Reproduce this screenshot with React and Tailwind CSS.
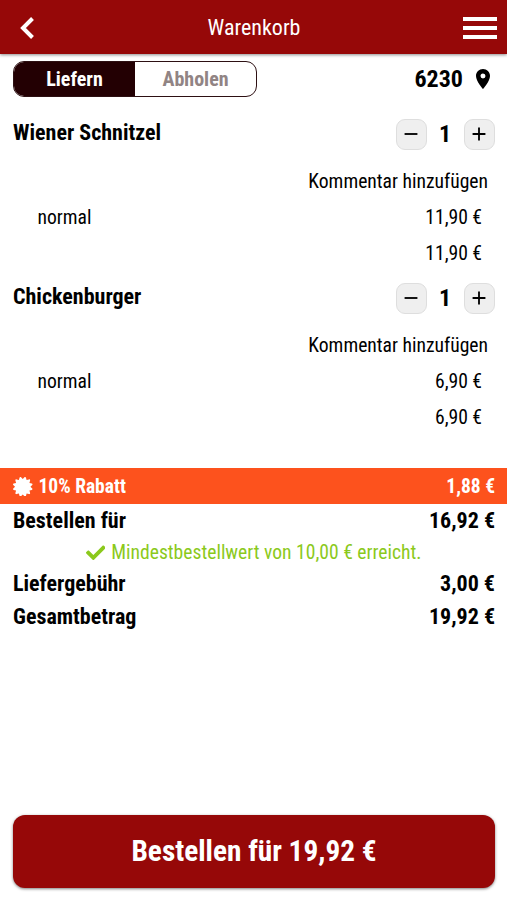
import { useState } from "react";
import { MdAdd, MdRemove, MdLocationOn } from "react-icons/md";
import { FaCertificate, FaCheck } from "react-icons/fa";

const items = [
  { id: 1, name: "Wiener Schnitzel", variant: "normal", price: "11,90 €" },
  { id: 2, name: "Chickenburger", variant: "normal", price: "6,90 €" }
];

function QtyButton({ children, label }) {
  return (
    <button
      aria-label={label}
      className="w-[31px] h-[31px] shrink-0 flex items-center justify-center rounded-[9px] border border-[#dedede] bg-[#efefef] text-[22px] text-black"
    >
      {children}
    </button>
  );
}

function CartItem({ item }) {
  return (
    <div className="h-[164px] text-[19.6px] leading-[36px]">
      <div className="h-[47px] flex justify-between pl-[13px] pr-[12.5px]">
        <h2 className="text-[22px] leading-[44px] font-bold">{item.name}</h2>
        <div className="h-[46px] flex items-center">
          <QtyButton label="Weniger"><MdRemove /></QtyButton>
          <span className="w-[37px] text-center text-[24px] font-bold">1</span>
          <QtyButton label="Mehr"><MdAdd /></QtyButton>
        </div>
      </div>
      <div className="h-[42px] pr-[19px] pt-[6px] text-right">Kommentar hinzufügen</div>
      <div className="h-9 flex justify-between pl-[37.5px] pr-[25px]">
        <span>{item.variant}</span>
        <span>{item.price}</span>
      </div>
      <div className="h-9 pr-[25px] text-right">{item.price}</div>
    </div>
  );
}

function SumRow({ label, value }) {
  return (
    <div className="h-[33px] flex items-center justify-between pl-[13px] pr-3 text-[22px] font-bold">
      <span>{label}</span>
      <span>{value}</span>
    </div>
  );
}

export default function App() {
  const [mode, setMode] = useState("liefern");

  return (
    <div className="w-[507px] h-[900px] flex flex-col overflow-hidden bg-white text-black font-['Roboto_Condensed','Roboto',sans-serif] [font-stretch:75%] font-[440]">
      <header className="h-[54px] shrink-0 flex items-center justify-between pl-[13px] pr-[10px] bg-[#960808] text-white shadow-[0_1px_3px_rgba(0,0,0,0.45)]">
        <svg width="32" height="24" viewBox="-2 -1 32 24" fill="none" stroke="currentColor" strokeWidth="4">
          <path d="M17.5 2.5 8 12l9.5 9.5" />
        </svg>
        <h1 className="text-[22px] font-[440]">Warenkorb</h1>
        <svg width="34" height="24" viewBox="0 0 34 24" fill="currentColor">
          <path d="M0 2h34v4H0zM0 11h34v4H0zM0 20h34v4H0z" />
        </svg>
      </header>

      <div className="h-[57px] shrink-0 flex justify-between pt-[7px] pl-[13px] pr-3">
        <div className="w-[244px] h-9 flex rounded-[11px] border border-[#2d1013] overflow-hidden text-[20px] font-bold">
          <button
            onClick={() => setMode("liefern")}
            className={mode === "liefern" ? "flex-1 bg-[#230003] text-white" : "flex-1 text-[#918484]"}
          >
            Liefern
          </button>
          <button
            onClick={() => setMode("abholen")}
            className={mode === "abholen" ? "flex-1 bg-[#230003] text-white" : "flex-1 text-[#918484]"}
          >
            Abholen
          </button>
        </div>
        <div className="h-9 flex items-center gap-2 text-[24px] font-bold">
          6230
          <MdLocationOn />
        </div>
      </div>

      {items.map((item) => (
        <CartItem key={item.id} item={item} />
      ))}

      <div className="h-9 shrink-0 mt-[29px] pt-px flex items-center justify-between pl-[13px] pr-3 bg-[#fd521d] text-white text-[19.5px] font-bold">
        <span className="flex items-center gap-[6px]">
          <FaCertificate />
          10% Rabatt
        </span>
        <span>1,88 €</span>
      </div>

      <SumRow label="Bestellen für" value="16,92 €" />
      <div className="h-[30px] pt-px flex items-center justify-center gap-[6px] text-[19.6px] text-[#8bc91c]">
        <FaCheck />
        Mindestbestellwert von 10,00 € erreicht.
      </div>
      <SumRow label="Liefergebühr" value="3,00 €" />
      <SumRow label="Gesamtbetrag" value="19,92 €" />

      <button className="h-[73px] shrink-0 mt-auto mb-3 ml-[13px] mr-3 rounded-[12px] bg-[#960808] text-white text-[29.3px] font-bold shadow-[0_1px_3px_rgba(0,0,0,0.5)]">
        Bestellen für 19,92 €
      </button>
    </div>
  );
}
